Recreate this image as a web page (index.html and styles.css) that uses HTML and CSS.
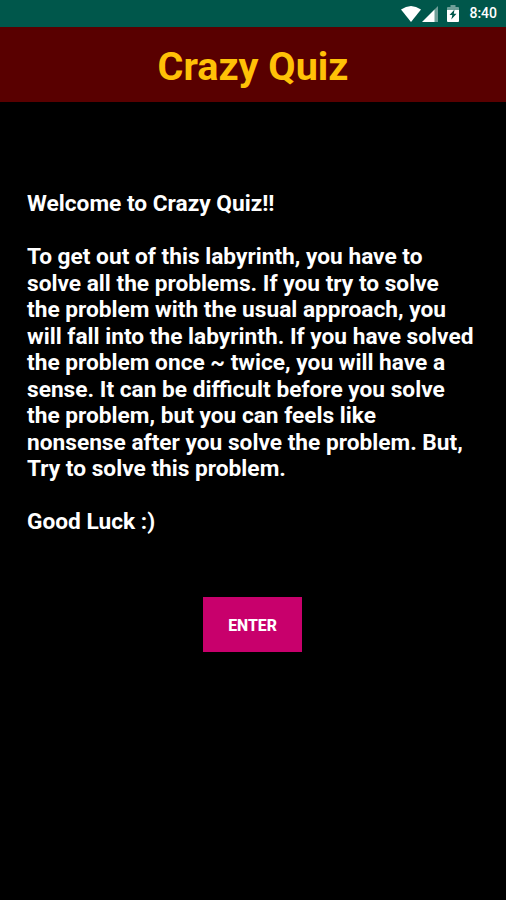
FILE: index.html
```html
<!DOCTYPE html>
<html lang="en">
<head>
    <meta charset="utf-8">
    <title>Crazy Quiz</title>
    <link rel="stylesheet" href="styles.css">
</head>
<body>
    <div class="status-bar">
        <svg class="wifi" width="20" height="16" viewBox="0 0 20 16">
            <path d="M0 3.5 Q10 -3.5 20 3.5 L10 16 Z"/>
        </svg>
        <svg class="signal" width="16" height="16" viewBox="0 0 16 16">
            <path class="dim" d="M12 4 L16 0 V16 H12 Z"/>
            <path d="M0 16 L12.5 3.5 V16 Z"/>
        </svg>
        <svg class="battery" width="12" height="17" viewBox="0 0 12 17">
            <path class="dim" d="M1 2 H3.5 V0 H8.5 V2 H11 Q12 2 12 3 V6 H0 V3 Q0 2 1 2 Z"/>
            <path d="M0 5 H12 V16 Q12 17 11 17 H1 Q0 17 0 16 Z"/>
            <path class="bolt" d="M7.5 4.5 L2.5 10 H5.3 L4.3 14.5 L9.5 8.8 H6.8 Z"/>
        </svg>
        <span class="clock">8:40</span>
    </div>

    <h1>Crazy Quiz</h1>

    <div class="intro">
        <p>Welcome to Crazy Quiz!!</p>
        <p>
            To get out of this labyrinth, you have to<br>
            solve all the problems. If you try to solve<br>
            the problem with the usual approach, you<br>
            will fall into the labyrinth. If you have solved<br>
            the problem once ~ twice, you will have a<br>
            sense. It can be difficult before you solve<br>
            the problem, but you can feels like<br>
            nonsense after you solve the problem. But,<br>
            Try to solve this problem.
        </p>
        <p>Good Luck :)</p>
    </div>

    <button>ENTER</button>
</body>
</html>
```

FILE: styles.css
```css
body {
    margin: 0;
    min-height: 900px;
    font-family: Roboto, sans-serif;
    background: #000;
    color: #fff;
}

.status-bar {
    display: flex;
    align-items: center;
    height: 27px;
    padding-right: 9px;
    justify-content: flex-end;
    background: #00574b;
}

.status-bar svg {
    fill: #fff;
}

.status-bar .dim {
    fill: #6f9f98;
}

.status-bar .bolt {
    fill: #00574b;
}

.signal {
    margin-left: 1px;
}

.battery {
    margin: 0 10px 0 9px;
}

.clock {
    font-size: 14px;
    font-weight: 500;
    line-height: 27px;
}

h1 {
    height: 75px;
    margin: 0;
    font-size: 39.6px;
    line-height: 80px;
    text-align: center;
    color: #ffc107;
    background: #590000;
}

.intro {
    margin: 89px 27px 0;
    font-size: 22.7px;
    font-weight: bold;
    line-height: 26.5px;
    white-space: nowrap;
}

.intro p {
    margin: 0 0 26.5px;
}

button {
    display: block;
    width: 99px;
    height: 55px;
    margin: 61px 0 0 203px;
    padding: 3px 0 0;
    border: none;
    font-family: inherit;
    font-size: 15.8px;
    font-weight: 800;
    color: #fff;
    background: #c8006c;
    cursor: pointer;
}
```
